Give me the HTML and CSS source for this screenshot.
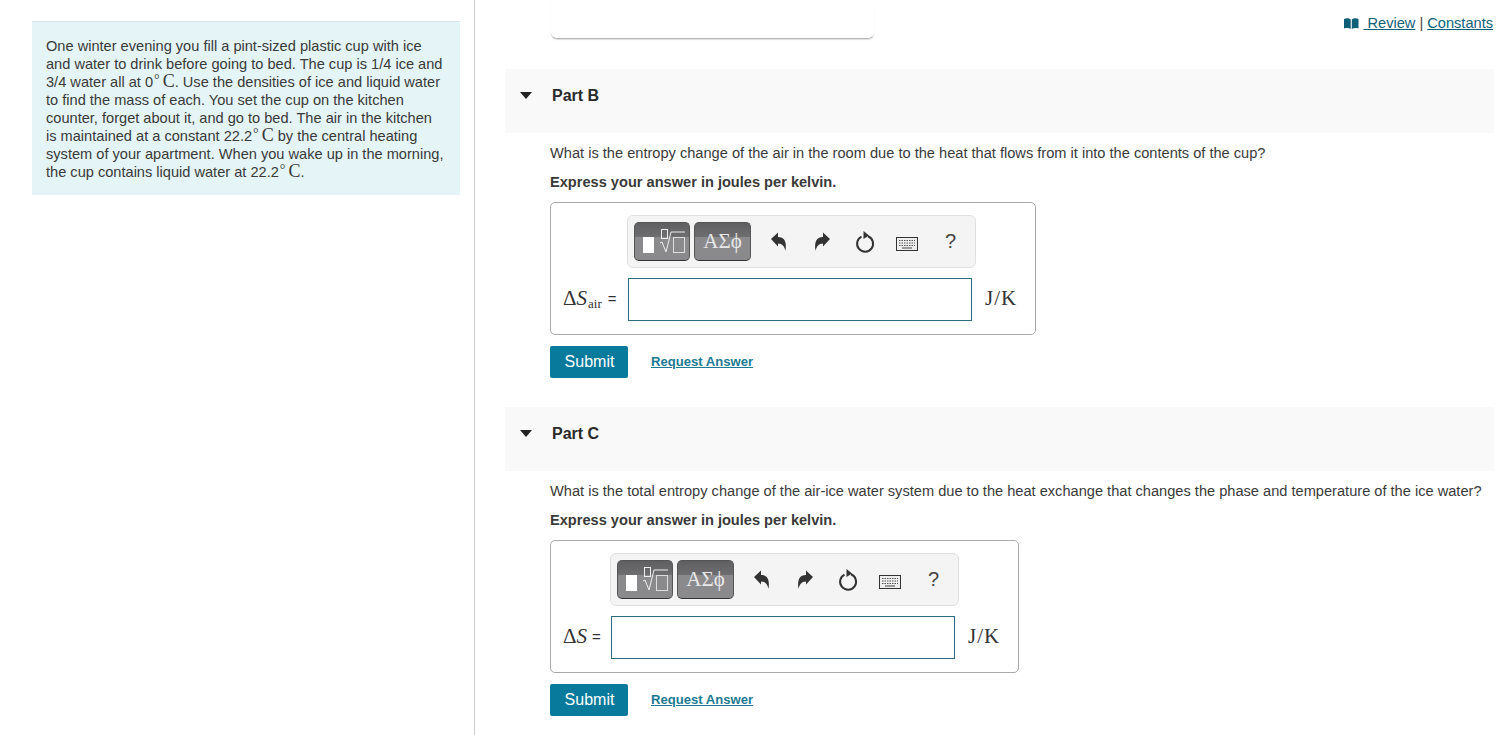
FILE: index.html
```html
<!DOCTYPE html>
<html>

<head>
    <meta charset="UTF-8">
    <title>Part B and Part C</title>
    <link rel="stylesheet" href="styles.css">
</head>

<body>
    <div class="page">
        <div class="sidebar">
            <div class="intro">
                One winter evening you fill a pint-sized plastic cup with ice and water to drink before going to bed.
                The cup is 1/4 ice and 3/4 water all at <span class="num">0<sup>°</sup><span class="unit-c">C</span></span>. Use the
                densities of ice and liquid water to find the mass of each. You set the cup on the kitchen counter,
                forget about it, and go to bed. The air in the kitchen is maintained at a constant
                <span class="num">22.2<sup>°</sup><span class="unit-c">C</span></span> by the central heating system of your apartment. When you
                wake up in the morning, the cup contains liquid water at <span class="num">22.2<sup>°</sup><span class="unit-c">C</span></span>.
            </div>
        </div>

        <div class="main">
            <div class="top-links">
                <svg class="book" width="15" height="11" viewBox="0 0 15 11">
                    <path d="M0 1c2-1 5-1 6.700 .5V11C5 9.800 2 9.800 0 10.500zM14.500 1c-2-1-5-1-6.700 .5V11c1.700-1.200 4.700-1.200 6.700-.5z" fill="#0f5f78" />
                </svg>
                <a href="#">&nbsp;Review</a> | <a href="#">Constants</a>
            </div>

            <div class="prev-part"></div>

            <!-- Part B -->
            <div class="part-head">
                <span class="caret"></span>
                <span class="part-title">Part B</span>
            </div>
            <div class="part-body">
                <p class="question">What is the entropy change of the air in the room due to the heat that flows from it into the contents of the cup?</p>
                <p class="express">Express your answer in joules per kelvin.</p>
                <div class="answer-box">
                    <div class="toolbar">
                        <span class="tool-btn tool-math">
                            <svg width="54" height="37" viewBox="0 0 54 37">
                                <rect x="8" y="14" width="11" height="16" fill="#fff" />
                                <rect x="26.5" y="6.5" width="6" height="9" fill="none" stroke="#eee" />
                                <path d="M25 20l2-1 4 10 5-20h14" fill="none" stroke="#eee" />
                                <rect x="38.5" y="14.5" width="11" height="15" fill="none" stroke="#ddd" />
                            </svg>
                        </span>
                        <span class="tool-btn tool-greek">ΑΣϕ</span>
                        <span class="tool-icon">
                            <svg width="18" height="20" viewBox="0 0 18 20">
                                <path d="M1 7l7-6.500v4.500c6 0 9 4 7.500 14-.8-4-3-7.500-7.500-7.500v3z" fill="#333" />
                            </svg>
                        </span>
                        <span class="tool-icon">
                            <svg width="18" height="20" viewBox="0 0 18 20">
                                <path d="M17 7l-7-6.500v4.500c-6 0-9 4-7.500 14 .8-4 3-7.500 7.500-7.500v3z" fill="#333" />
                            </svg>
                        </span>
                        <span class="tool-icon">
                            <svg width="20" height="22" viewBox="0 0 20 22">
                                <path d="M6.500 5.600a8 8 0 1 0 6.500-.3" fill="none" stroke="#333" stroke-width="2" />
                                <path d="M8.500 0l5.500 4.500-5.500 3.500z" fill="#333" />
                            </svg>
                        </span>
                        <span class="tool-icon tool-keys">
                            <svg width="22" height="14" viewBox="0 0 22 14">
                                <rect x=".5" y=".5" width="21" height="13" fill="#eee" stroke="#333" />
                                <path d="M3 3.500h16M3 6h16M3 8.500h16" stroke="#555" stroke-dasharray="1.500 1" />
                                <path d="M6 11h10" stroke="#444" />
                            </svg>
                        </span>
                        <span class="tool-icon tool-help">?</span>
                    </div>
                    <div class="math-label label-air"><span class="delta">Δ</span><i>S</i><sub>air</sub><span class="eq">=</span></div>
                    <input class="answer-input" type="text">
                    <div class="math-unit">J/K</div>
                </div>
                <div class="actions">
                    <button class="submit">Submit</button>
                    <a class="request" href="#">Request Answer</a>
                </div>
            </div>

            <!-- Part C -->
            <div class="part-head">
                <span class="caret"></span>
                <span class="part-title">Part C</span>
            </div>
            <div class="part-body">
                <p class="question">What is the total entropy change of the air-ice water system due to the heat exchange that changes the phase and temperature of the ice water?</p>
                <p class="express">Express your answer in joules per kelvin.</p>
                <div class="answer-box">
                    <div class="toolbar">
                        <span class="tool-btn tool-math">
                            <svg width="54" height="37" viewBox="0 0 54 37">
                                <rect x="8" y="14" width="11" height="16" fill="#fff" />
                                <rect x="26.5" y="6.5" width="6" height="9" fill="none" stroke="#eee" />
                                <path d="M25 20l2-1 4 10 5-20h14" fill="none" stroke="#eee" />
                                <rect x="38.5" y="14.5" width="11" height="15" fill="none" stroke="#ddd" />
                            </svg>
                        </span>
                        <span class="tool-btn tool-greek">ΑΣϕ</span>
                        <span class="tool-icon">
                            <svg width="18" height="20" viewBox="0 0 18 20">
                                <path d="M1 7l7-6.500v4.500c6 0 9 4 7.500 14-.8-4-3-7.500-7.500-7.500v3z" fill="#333" />
                            </svg>
                        </span>
                        <span class="tool-icon">
                            <svg width="18" height="20" viewBox="0 0 18 20">
                                <path d="M17 7l-7-6.500v4.500c-6 0-9 4-7.500 14 .8-4 3-7.500 7.500-7.500v3z" fill="#333" />
                            </svg>
                        </span>
                        <span class="tool-icon">
                            <svg width="20" height="22" viewBox="0 0 20 22">
                                <path d="M6.500 5.600a8 8 0 1 0 6.500-.3" fill="none" stroke="#333" stroke-width="2" />
                                <path d="M8.500 0l5.500 4.500-5.500 3.500z" fill="#333" />
                            </svg>
                        </span>
                        <span class="tool-icon tool-keys">
                            <svg width="22" height="14" viewBox="0 0 22 14">
                                <rect x=".5" y=".5" width="21" height="13" fill="#eee" stroke="#333" />
                                <path d="M3 3.500h16M3 6h16M3 8.500h16" stroke="#555" stroke-dasharray="1.500 1" />
                                <path d="M6 11h10" stroke="#444" />
                            </svg>
                        </span>
                        <span class="tool-icon tool-help">?</span>
                    </div>
                    <div class="math-label label-total"><span class="delta">Δ</span><i>S</i><span class="eq eq-near">=</span></div>
                    <input class="answer-input" type="text">
                    <div class="math-unit">J/K</div>
                </div>
                <div class="actions">
                    <button class="submit">Submit</button>
                    <a class="request" href="#">Request Answer</a>
                </div>
            </div>
        </div>
    </div>
</body>

</html>
```

FILE: styles.css
```css
/* page layout */
html,
body {
    margin: 0;
    padding: 0;
    background: #fff;
    overflow: hidden;
}

body {
    font-family: "Liberation Sans", Arial, sans-serif;
    color: #333;
}

.page {
    display: flex;
    height: 735px;
}

.sidebar {
    width: 474px;
    flex: none;
    border-right: 1px solid #ccc;
    padding-top: 21px;
}

.intro {
    width: 398px;
    margin-left: 32px;
    padding: 15px 16px 14px 14px;
    background: #e5f5f7;
    border-top: 1px solid #d6e6e8;
    font-size: 14.6px;
    line-height: 18px;
    color: #3a3a3a;
}

.num {
    white-space: nowrap;
}

.num sup {
    margin-left: 1px;
    font-family: "Liberation Serif", serif;
    font-size: 14px;
    line-height: 0;
    vertical-align: 3px;
}

.unit-c {
    font-family: "Liberation Serif", serif;
    font-size: 18px;
    line-height: 0;
    margin-left: 3px;
}

.main {
    position: relative;
    flex: 1;
    padding: 0 15px 0 30px;
}

.top-links {
    position: absolute;
    top: 14px;
    right: 16px;
    font-size: 14.6px;
    line-height: 18px;
    color: #444;
}

.top-links a {
    color: #0f5f78;
}

.book {
    vertical-align: -1px;
}

.prev-part {
    width: 323px;
    height: 39px;
    margin-left: 46px;
    box-sizing: border-box;
    border-bottom: 1px solid #b8b8b8;
    border-radius: 0 0 6px 6px;
    box-shadow: 0 1px 1px #ddd;
}

/* part header */
.part-head {
    display: flex;
    align-items: flex-start;
    height: 64px;
    margin-top: 30px;
    background: #f9f9f9;
}

.part-body + .part-head {
    margin-top: 29px;
}

.caret {
    width: 0;
    height: 0;
    margin: 23px 20px 0 15px;
    border-left: 6px solid transparent;
    border-right: 6px solid transparent;
    border-top: 7px solid #222;
}

.part-title {
    margin-top: 18px;
    font-size: 16px;
    line-height: 18px;
    font-weight: bold;
    color: #2a2a2a;
}

.part-body {
    padding-left: 45px;
}

.question {
    margin: 11px 0 0;
    font-size: 14.62px;
    line-height: 18px;
    color: #3a3a3a;
    white-space: nowrap;
}

.express {
    margin: 11px 0 0;
    font-size: 14.6px;
    line-height: 18px;
    font-weight: bold;
    color: #3a3a3a;
}

/* answer box */
.answer-box {
    display: inline-grid;
    grid-template-columns: auto 344px auto;
    align-items: center;
    margin-top: 11px;
    padding: 12px 18px 13px 12px;
    border: 1px solid #aaa;
    border-radius: 5px;
    vertical-align: top;
}

.toolbar {
    grid-column: 2 / 4;
    display: flex;
    align-items: center;
    box-sizing: border-box;
    width: 349px;
    height: 53px;
    margin-left: -1px;
    padding-left: 6px;
    margin-bottom: 10px;
    background: #f4f4f4;
    border: 1px solid #e0e0e0;
    border-radius: 6px;
}

.tool-btn {
    display: flex;
    align-items: center;
    justify-content: center;
    box-sizing: border-box;
    height: 39px;
    border: 1px solid #555;
    border-bottom-color: #333;
    border-radius: 5px;
    background: linear-gradient(#5f5f61 0, #6e6e70 38%, #8a8a8c 38%, #8a8a8c 100%);
}

.tool-math {
    width: 56px;
    margin-right: 4px;
}

.tool-greek {
    width: 57px;
    margin-right: 6px;
    font-family: "Liberation Serif", serif;
    font-size: 21px;
    color: #e8e8e8;
}

.tool-icon {
    display: flex;
    align-items: center;
    justify-content: center;
    width: 43px;
    height: 39px;
}

.tool-keys {
    box-sizing: border-box;
    margin-left: -1px;
    margin-right: 1px;
    padding-top: 5px;
}

.tool-help {
    font-size: 20px;
    color: #444;
}

.math-label {
    margin-bottom: 2px;
    font-family: "Liberation Serif", serif;
    font-size: 21px;
    color: #333;
    white-space: nowrap;
}

.label-air {
    width: 65px;
}

.label-total {
    width: 48px;
}

.math-label sub {
    margin-left: 1px;
    font-size: 13px;
    line-height: 0;
    vertical-align: -3px;
}

.eq {
    margin-left: 6px;
    font-family: "Liberation Sans", sans-serif;
    font-size: 15px;
    vertical-align: 1px;
}

.eq-near {
    margin-left: 5px;
}

.answer-input {
    box-sizing: border-box;
    width: 344px;
    height: 43px;
    margin: 0;
    border: 1px solid #2c6e80;
    background: #fff;
    outline: none;
}

.math-unit {
    width: 32px;
    margin-left: 13px;
    margin-bottom: 2px;
    font-family: "Liberation Serif", serif;
    font-size: 21px;
    letter-spacing: 1px;
    color: #333;
    white-space: nowrap;
}

/* submit row */
.actions {
    display: flex;
    align-items: center;
    margin-top: 11px;
}

.submit {
    width: 78px;
    height: 32px;
    padding: 0 0 0 1px;
    border: 0;
    border-radius: 2px;
    background: #087a9c;
    color: #fff;
    font-family: "Liberation Sans", sans-serif;
    font-size: 16px;
}

.request {
    margin-left: 23px;
    margin-bottom: 2px;
    font-size: 13.1px;
    font-weight: bold;
    color: #1c7a94;
}
```
